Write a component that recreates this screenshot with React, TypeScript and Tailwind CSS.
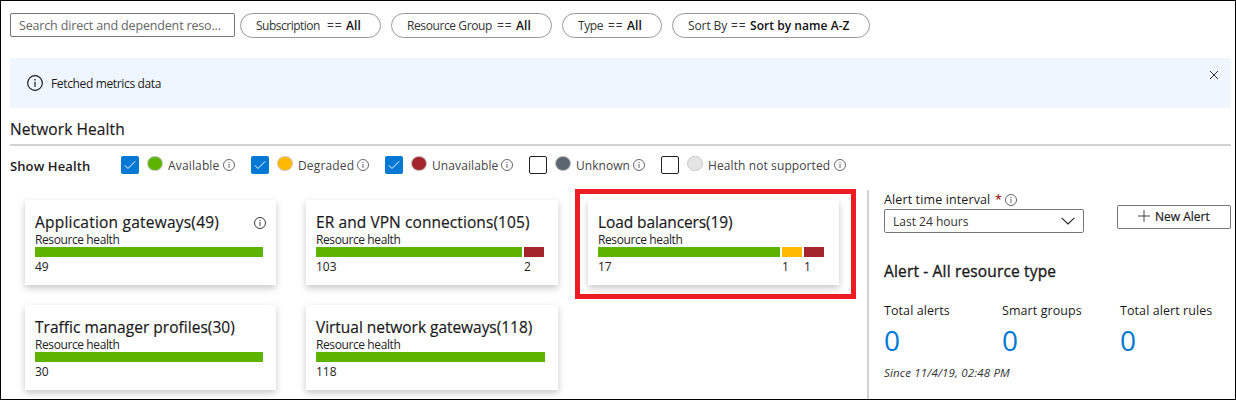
import React from "react";

function InfoIcon({ size = 12, className = "" }: { size?: number; className?: string }) {
  return (
    <svg width={size} height={size} viewBox="0 0 12 12" className={"shrink-0 " + className} fill="none">
      <circle cx="6" cy="6" r="5.5" stroke="currentColor" strokeWidth="0.9" />
      <path d="M6 5v4" stroke="currentColor" strokeWidth="0.9" />
      <path d="M6 3v1.1" stroke="currentColor" strokeWidth="1" />
    </svg>
  );
}

const filters = [
  { name: "Subscription", value: "All", width: "w-[141px]", nameStyle: "w-[71px] tracking-[-0.5px]" },
  { name: "Resource Group", value: "All", width: "w-[161px]", nameStyle: "w-[90px] tracking-[-0.4px]" },
  { name: "Type", value: "All", width: "w-[100px]", nameStyle: "w-[30px] tracking-[-0.4px]" },
  { name: "Sort By", value: "Sort by name A-Z", width: "w-[198px]", nameStyle: "w-[43px] tracking-[-0.1px]" },
];

const states = [
  { label: "Available", checked: true, dot: "bg-[#5db300]", width: "w-[130px]", text: "w-[55px] tracking-[0.15px]" },
  { label: "Degraded", checked: true, dot: "bg-[#ffb900]", width: "w-[134px]", text: "w-[59px] tracking-[0.15px]" },
  { label: "Unavailable", checked: true, dot: "bg-[#a4262c]", width: "w-[144px]", text: "w-[69px] tracking-[0.1px]" },
  { label: "Unknown", checked: false, dot: "bg-[#5c6670]", width: "w-[132px]", text: "w-[57px] tracking-[0.05px]" },
  { label: "Health not supported", checked: false, dot: "bg-[#e5e5e5]", width: "w-[190px]", text: "w-[126px] tracking-[0.1px]" },
];

type Segment = { count: number; color: string; width: string };
type CardData = { title: string; tracking: string; info?: boolean; marked?: boolean; segments: Segment[] };

const GREEN = "bg-[#5db300]";
const YELLOW = "bg-[#ffb900]";
const RED = "bg-[#a4262c]";

const cards: CardData[] = [
  { title: "Application gateways(49)", tracking: "tracking-[0.22px]", info: true, segments: [{ count: 49, color: GREEN, width: "w-[228px]" }] },
  {
    title: "ER and VPN connections(105)",
    tracking: "tracking-[0.08px]",
    segments: [
      { count: 103, color: GREEN, width: "w-[206px]" },
      { count: 2, color: RED, width: "w-[20px]" },
    ],
  },
  {
    title: "Load balancers(19)",
    tracking: "tracking-[-0.1px]",
    marked: true,
    segments: [
      { count: 17, color: GREEN, width: "w-[182px]" },
      { count: 1, color: YELLOW, width: "w-[20px]" },
      { count: 1, color: RED, width: "w-[20px]" },
    ],
  },
  { title: "Traffic manager profiles(30)", tracking: "tracking-[0.03px]", segments: [{ count: 30, color: GREEN, width: "w-[228px]" }] },
  { title: "Virtual network gateways(118)", tracking: "tracking-[-0.04px]", segments: [{ count: 118, color: GREEN, width: "w-[229px]" }] },
];

function Card({ card }: { card: CardData }) {
  return (
    <div className="relative h-[85px] bg-white pl-[10px] pt-[12px] shadow-[0_3px_7px_rgba(0,0,0,0.22)]">
      <div className="flex h-5 items-start justify-between pr-[10px]">
        <h3
          className={
            "whitespace-nowrap text-[15.5px] leading-[21px] text-[#1b1b1b] [-webkit-text-stroke:0.2px_#1b1b1b] " + card.tracking
          }
        >
          {card.title}
        </h3>
        {card.info && <InfoIcon className="mt-[5px] text-[#222]" />}
      </div>
      <div className="h-[15px] text-[12px] leading-[15px] tracking-[-0.4px] text-[#222]">Resource health</div>
      <div className="flex gap-[2px]">
        {card.segments.map((s, i) => (
          <div key={i} className={s.width}>
            <div className={"h-[10px] " + s.color} />
            <div className="text-[12px] leading-[19px] text-[#222]">{s.count}</div>
          </div>
        ))}
      </div>
      {card.marked && <div className="absolute -left-[13px] -top-[11px] h-[110px] w-[281px] border-[5px] border-[#ed1c24]" />}
    </div>
  );
}

const stats = ["Total alerts", "Smart groups", "Total alert rules"];

export default function App() {
  return (
    <div className="flex h-[400px] w-[1236px] flex-col overflow-hidden border border-black bg-white pl-[9px] pr-[4px] font-['Open_Sans','Noto_Sans',sans-serif] text-[#1b1b1b]">
      <div className="mt-3 flex h-[25px] shrink-0 items-start">
        <div className="mr-[5px] h-6 w-[225px] rounded-[2px] border border-[#767676] pl-[8px] text-[12.5px] leading-[23px] tracking-[-0.16px] whitespace-nowrap text-[#666]">
          Search direct and dependent reso...
        </div>
        <div className="flex gap-[10px]">
          {filters.map((f) => (
            <div
              key={f.name}
              className={"flex h-[25px] rounded-full border border-[#999] pl-[15px] text-[12px] leading-[24px] whitespace-nowrap text-[#333] " + f.width}
            >
              <span className={"shrink-0 " + f.nameStyle}>{f.name}</span>
              <span className="w-[19px] shrink-0 tracking-[1px]">==</span>
              <span className="font-semibold tracking-[0.05px] text-[#111]">{f.value}</span>
            </div>
          ))}
        </div>
      </div>

      <div className="mt-5 flex h-[50px] w-[1221px] shrink-0 items-start rounded-[2px] bg-[#eff6ff] pl-[17px] pr-[13px]">
        <InfoIcon size={16} className="mt-[17px]" />
        <span className="ml-2 mt-[16px] text-[12px] leading-[19px] tracking-[-0.35px]">Fetched metrics data</span>
        <svg width="8" height="8" viewBox="0 0 8 8" className="ml-auto mt-[13px]" stroke="#333" strokeWidth="1">
          <path d="M0 0l8 8M8 0l-8 8" />
        </svg>
      </div>

      <h2 className="mt-[10px] h-[26px] w-[1221px] shrink-0 text-[15.5px] leading-[23px] tracking-[0.1px] [-webkit-text-stroke:0.2px_#1b1b1b]">
        Network Health
      </h2>
      <div className="h-[2px] w-[1221px] shrink-0 bg-[#d2d2d2]" />

      <div className="mt-[10px] flex h-[18px] shrink-0">
        <div className="w-[111px] text-[13px] leading-[20px] font-semibold tracking-[0.1px]">Show Health</div>
        {states.map((s) => (
          <div key={s.label} className={"flex items-start " + s.width}>
            <div
              className={
                "flex h-[18px] w-[18px] items-center justify-center rounded-[2px] " +
                (s.checked ? "bg-[#0078d4]" : "border border-[#222] bg-white")
              }
            >
              {s.checked && (
                <svg width="12" height="10" viewBox="0 0 12 10" fill="none" stroke="#fff" strokeWidth="1">
                  <path d="M0.8 5.3l3.2 3.2L11.2 1.3" />
                </svg>
              )}
            </div>
            <div className={"ml-2 h-[15px] w-[16px] rounded-full border border-[#c8c8c8] " + s.dot} />
            <div className={"ml-[5px] whitespace-nowrap text-[12px] leading-[20px] text-[#444] " + s.text}>{s.label}</div>
            <InfoIcon className="mt-[3px] text-[#555]" />
          </div>
        ))}
      </div>

      <div className="flex shrink-0 pt-[16px]">
        <div className="grid w-[857px] grid-cols-[251px_252px_251px] content-start gap-x-[30px] gap-y-5 pl-[15px] pt-[10px]">
          {cards.map((c) => (
            <Card key={c.title} card={c} />
          ))}
        </div>
        <div className="h-[210px] w-[364px] border-l-2 border-[#d2d2d2] pl-[15px]">
          <div className="flex h-[43px] justify-between">
            <div>
              <div className="flex h-[19px] items-center text-[12.5px] leading-[19px]">
                <span className="w-[106px] whitespace-nowrap tracking-[0.12px]">Alert time interval</span>
                <span className="ml-[5px] w-[10px] font-semibold text-[#a4262c]">*</span>
                <InfoIcon className="text-[#555]" />
              </div>
              <div className="flex h-6 w-[200px] items-center justify-between rounded-[2px] border border-[#767676] pl-2 pr-2">
                <span className="pt-px text-[12px] leading-[22px] text-[#333]">Last 24 hours</span>
                <svg width="14" height="8" viewBox="0 0 14 8" fill="none" stroke="#222" strokeWidth="1.1">
                  <path d="M0.6 0.8L7 7l6.4-6.2" />
                </svg>
              </div>
            </div>
            <div className="mt-[15px] flex h-6 w-[114px] items-center rounded-[2px] border border-[#767676] pl-5">
              <svg width="12" height="12" viewBox="0 0 12 12" stroke="#444" strokeWidth="1" className="-mt-[2px]">
                <path d="M6 0v12M0 6h12" />
              </svg>
              <span className="ml-[5px] text-[12px] whitespace-nowrap [-webkit-text-stroke:0.2px_#1b1b1b]">New Alert</span>
            </div>
          </div>
          <h2 className="mt-[28px] text-[15.5px] leading-5 tracking-[0.16px] whitespace-nowrap [-webkit-text-stroke:0.35px_#1b1b1b]">
            Alert - All resource type
          </h2>
          <div className="mt-5 flex">
            {stats.map((s) => (
              <div key={s} className="w-[118px] shrink-0">
                <div className="text-[12.5px] leading-5 tracking-[0.08px] whitespace-nowrap">{s}</div>
                <div className="h-[42px] text-[28px] leading-[38px] text-[#0078d4]">0</div>
              </div>
            ))}
          </div>
          <div className="text-[11.5px] leading-5 tracking-[0.16px] whitespace-nowrap text-[#333] italic">Since 11/4/19, 02:48 PM</div>
        </div>
      </div>
    </div>
  );
}
